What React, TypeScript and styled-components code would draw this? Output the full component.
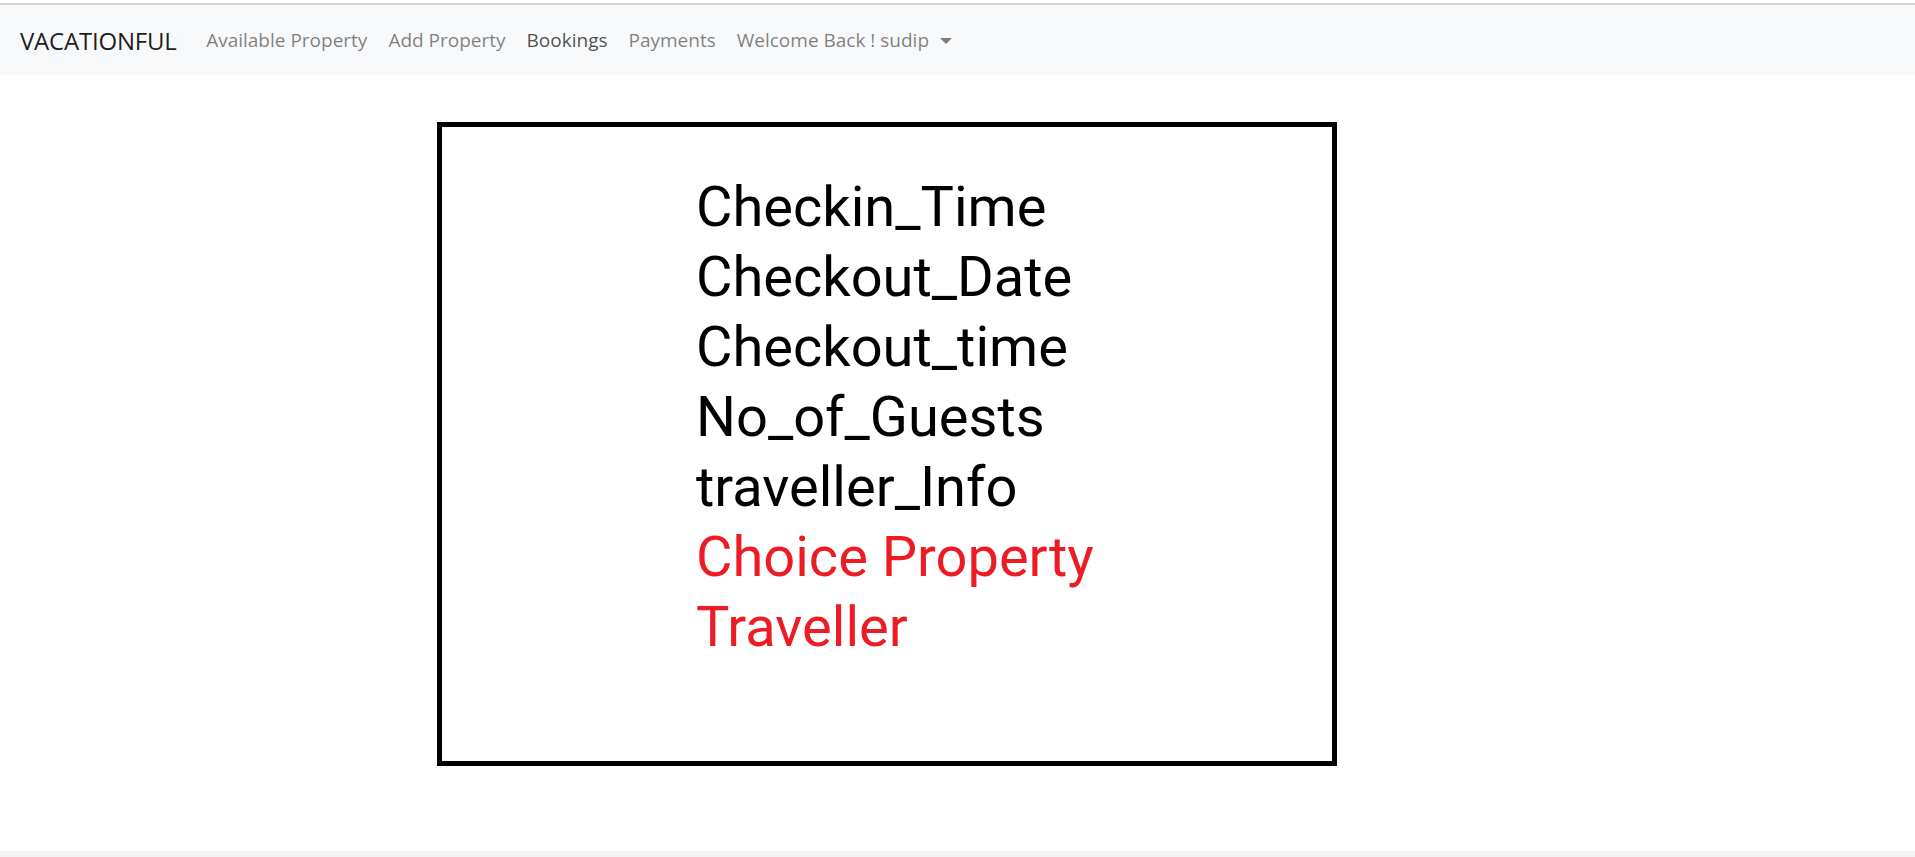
import React from "react";
import styled, { createGlobalStyle } from "styled-components";

const Global = createGlobalStyle`
  html, body { margin: 0; padding: 0; background: #fff; }
  body { font-family: "Open Sans", "Noto Sans", sans-serif; }
`;

const Page = styled.div`
  min-height: 857px;
  display: flex;
  flex-direction: column;
  border-top: 3px solid #fff;
`;

const TopLine = styled.div`
  height: 2px;
  background: #d3d3d3;
`;

const Navbar = styled.nav`
  height: 70px;
  background: #f8f9fa;
  display: flex;
  align-items: center;
  padding: 0 20px;
  box-sizing: border-box;
`;

const Brand = styled.a`
  font-family: "Open Sans", "Noto Sans", sans-serif;
  font-size: 24px;
  color: rgba(0, 0, 0, 0.9);
  text-decoration: none;
  margin-right: 19px;
  letter-spacing: -0.2px;
`;

const NavList = styled.ul`
  display: flex;
  list-style: none;
  margin: 0;
  padding: 0;
`;

const NavLink = styled.a<{ $active?: boolean }>`
  display: flex;
  align-items: center;
  padding: 8px 10.5px;
  font-family: "Open Sans", "Noto Sans", sans-serif;
  font-size: 19px;
  color: ${(p) => (p.$active ? "rgba(0,0,0,0.7)" : "rgba(0,0,0,0.5)")};
  text-decoration: none;
`;

const Caret = styled.span`
  display: inline-block;
  margin-left: 11px;
  width: 0;
  height: 0;
  border-left: 6px solid transparent;
  border-right: 6px solid transparent;
  border-top: 6px solid rgba(0, 0, 0, 0.5);
  margin-top: 1px;
`;

const Main = styled.main`
  flex: 1;
  padding: 47px 0 0 437px;
`;

const Card = styled.section`
  width: 900px;
  height: 644px;
  box-sizing: border-box;
  border: 5px solid #000;
  padding: 45px 0 0 254px;
`;

const Field = styled.div<{ $red?: boolean }>`
  font-family: Roboto, "Noto Sans", sans-serif;
  font-size: 56px;
  line-height: 70px;
  color: ${(p) => (p.$red ? "#ed1c24" : "#000")};
  white-space: nowrap;
`;

const Footer = styled.footer`
  height: 9px;
  background: #f5f5f5;
`;

const fields: { label: string; red?: boolean }[] = [
  { label: "Checkin_Time" },
  { label: "Checkout_Date" },
  { label: "Checkout_time" },
  { label: "No_of_Guests" },
  { label: "traveller_Info" },
  { label: "Choice Property", red: true },
  { label: "Traveller", red: true },
];

export default function App() {
  return (
    <>
      <Global />
      <Page>
        <TopLine />
        <Navbar>
          <Brand href="#">VACATIONFUL</Brand>
          <NavList>
            <li><NavLink href="#">Available Property</NavLink></li>
            <li><NavLink href="#">Add Property</NavLink></li>
            <li><NavLink href="#" $active>Bookings</NavLink></li>
            <li><NavLink href="#">Payments</NavLink></li>
            <li>
              <NavLink href="#">
                Welcome Back ! sudip
                <Caret />
              </NavLink>
            </li>
          </NavList>
        </Navbar>
        <Main>
          <Card>
            {fields.map((f) => (
              <Field key={f.label} $red={f.red}>
                {f.label}
              </Field>
            ))}
          </Card>
        </Main>
        <Footer />
      </Page>
    </>
  );
}
